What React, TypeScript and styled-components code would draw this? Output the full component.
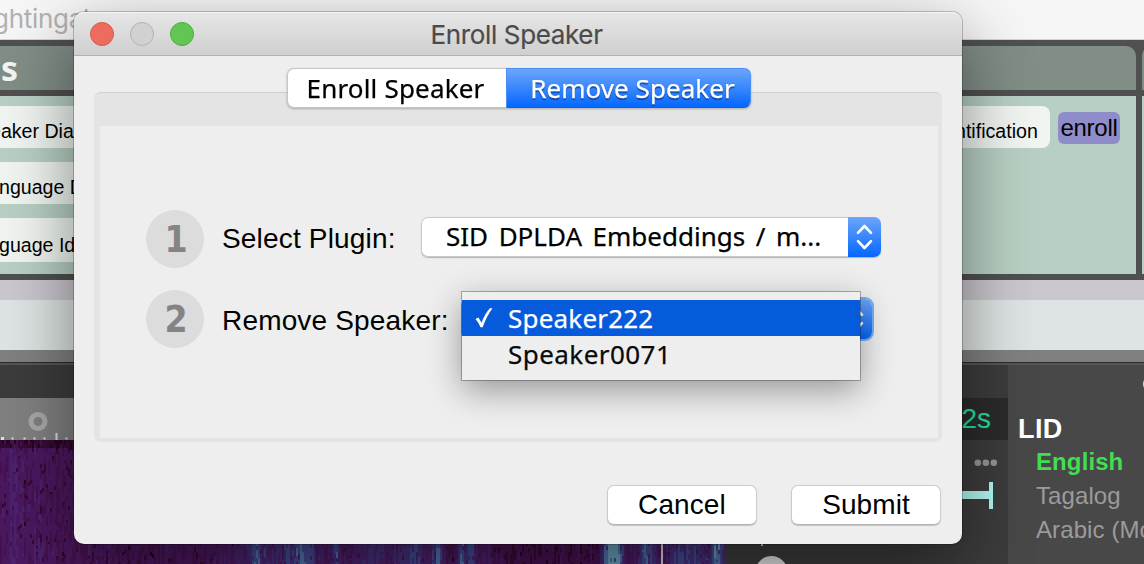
import React from "react";
import styled, { createGlobalStyle, css } from "styled-components";

const SANS = `"Liberation Sans", Arial, sans-serif`;
const HUMANIST = `"Noto Sans", "Open Sans", sans-serif`;

const GlobalStyle = createGlobalStyle`
  *, *::before, *::after { box-sizing: border-box; }
  body { margin: 0; background: #3b3b3b; overflow: hidden; }
`;

/* ---------- main window ---------- */

const Screen = styled.div`
  position: relative;
  display: flex;
  flex-direction: column;
  width: 1144px;
  height: 564px;
  overflow: hidden;
  font-family: ${SANS};
  color: #000;
`;

const AppBar = styled.header`
  height: 40px;
  flex: none;
  background: #f6f6f6;
  border-bottom: 1px solid #d2d2d2;
  font: 400 26px/38px Inter, sans-serif;
  color: #b2b2b2;
  white-space: nowrap;
`;

const AppName = styled.span`
  display: block;
  margin-left: -7px;
  letter-spacing: -0.3px;
`;

const Board = styled.section`
  display: flex;
  gap: 6px;
  height: 240px;
  flex: none;
  padding: 6px 0;
  background: #505050;
`;

const Panel = styled.div<{ $width: number }>`
  display: flex;
  flex-direction: column;
  gap: 6px;
  flex: none;
  width: ${(p) => p.$width}px;
`;

const PanelHead = styled.h2<{ $first?: boolean }>`
  margin: 0;
  height: 44px;
  padding-left: 1px;
  background: #808e86;
  border-radius: ${(p) => (p.$first ? "0 10px 0 0" : "10px 0 0 0")};
  font: 700 34px/45px ${HUMANIST};
  color: #f4f4f4;
`;

const PanelBody = styled.div`
  display: flex;
  justify-content: space-between;
  flex: 1;
  padding: 10px 16px 12px 0;
  background: #b8d0c3;
`;

const PluginColumn = styled.div`
  display: flex;
  flex-direction: column;
  gap: 14px;
`;

const Plugin = styled.div<{ $shift?: number; $tall?: boolean; $round?: boolean }>`
  width: 110px;
  height: ${(p) => (p.$tall ? 44 : 42)}px;
  padding-left: ${(p) => (p.$shift && p.$shift > 0 ? p.$shift : 0)}px;
  text-indent: ${(p) => (p.$shift && p.$shift < 0 ? p.$shift : 0)}px;
  border-radius: ${(p) => (p.$round ? "0 8px 8px 0" : "0")};
  background: #f0f5f1;
  font-size: 19.600px;
  line-height: ${(p) => (p.$tall ? 54 : 51)}px;
  white-space: nowrap;
  overflow: hidden;
`;

const PluginRow = styled.div`
  display: flex;
  gap: 8px;
`;

const Tag = styled.span`
  width: 62px;
  height: 32px;
  margin-top: 6px;
  border-radius: 6px;
  background: #8f8dc9;
  font-size: 24px;
  line-height: 32px;
  letter-spacing: -0.25px;
  text-align: center;
`;

const Band = styled.div<{ $color: string; $height: number }>`
  flex: none;
  height: ${(p) => p.$height}px;
  background: ${(p) => p.$color};
`;

const Workspace = styled.section`
  display: flex;
  flex: 1;
  min-height: 0;
`;

const Timeline = styled.div`
  display: flex;
  flex-direction: column;
  width: 1008px;
  background: #3c3c3c;
`;

const RulerRow = styled.div`
  display: flex;
  justify-content: space-between;
  height: 42px;
  margin-top: 33px;
  flex: none;
`;

const Ruler = styled.svg`
  width: 725px;
  height: 42px;
  background: #808080;
`;

const Duration = styled.div`
  width: 120px;
  padding-right: 17px;
  background: #2b2b2b;
  color: #1fe2a4;
  font-size: 28px;
  line-height: 42px;
  text-align: right;
`;

const TrackRow = styled.div`
  display: flex;
  flex: 1;
`;

const Spectrogram = styled.svg`
  width: 725px;
  height: 124px;
  background: #3d1450;
`;

const TrackControls = styled.svg`
  width: 283px;
  height: 124px;
`;

const Sidebar = styled.aside`
  flex: 1;
  overflow: hidden;
  padding-left: 10px;
  background: #484848;
  white-space: nowrap;
`;

const SidebarTop = styled.div`
  display: flex;
  justify-content: flex-end;
  height: 47px;
  padding-top: 15px;
`;

const SidebarTitle = styled.h3`
  margin: 0;
  font-size: 27px;
  line-height: 34px;
  letter-spacing: 0.4px;
  color: #fff;
`;

const Language = styled.div<{ $active?: boolean }>`
  margin-top: ${(p) => (p.$active ? -1 : 0)}px;
  padding-left: 18px;
  font-size: 24px;
  line-height: 34px;
  font-weight: ${(p) => (p.$active ? 700 : 400)};
  color: ${(p) => (p.$active ? "#40df51" : "#9b9b9b")};
  letter-spacing: 0.1px;
`;

/* ---------- dialog ---------- */

const Dialog = styled.div`
  position: absolute;
  left: 74px;
  top: 12px;
  display: flex;
  flex-direction: column;
  width: 888px;
  height: 532px;
  border-radius: 10px;
  background: #eeeeee;
  box-shadow: 0 0 0 1px rgba(0, 0, 0, 0.22), 0 24px 70px rgba(0, 0, 0, 0.46);
`;

const TitleBar = styled.div`
  display: flex;
  align-items: center;
  height: 44px;
  flex: none;
  padding: 0 16px;
  border-radius: 10px 10px 0 0;
  border-top: 1px solid #f5f5f5;
  border-bottom: 1px solid #b1b1b1;
  background: linear-gradient(#e6e6e6, #cfcfcf);
`;

const Lights = styled.div`
  display: flex;
  gap: 16px;
  width: 104px;
`;

const Light = styled.span<{ $fill: string; $edge: string }>`
  width: 24px;
  height: 24px;
  border-radius: 50%;
  border: 1px solid ${(p) => p.$edge};
  background: ${(p) => p.$fill};
`;

const Title = styled.h1`
  flex: 1;
  margin: 0 107px 0 0;
  padding-top: 1px;
  font: 400 26px/39px Inter, sans-serif;
  letter-spacing: -0.35px;
  -webkit-text-stroke: 0.2px;
  text-align: center;
  color: #4b4b4b;
`;

const Tabs = styled.div`
  display: flex;
  z-index: 1;
  align-self: flex-start;
  margin: 12px 0 -16px 213px;
  filter: drop-shadow(0 1px 1px rgba(0, 0, 0, 0.25));
`;

const Tab = styled.button<{ $active?: boolean }>`
  height: 40px;
  padding: 0 3px 0 0;
  width: ${(p) => (p.$active ? 245 : 219)}px;
  border: 1px solid #c6c6c6;
  border-right: 0;
  border-radius: 7px 0 0 7px;
  background: #fff;
  font: 400 26px/38px ${HUMANIST};
  letter-spacing: 0.18px;
  -webkit-text-stroke: 0.25px;
  ${(p) =>
    p.$active &&
    css`
      border: 1px solid #4a8ff8;
      border-bottom-color: #0a62f0;
      border-radius: 0 7px 7px 0;
      padding: 0 0 0 8px;
      background: linear-gradient(#6ca6fb, #0567ff);
      color: #fff;
      letter-spacing: 0.04px;
      text-shadow: 0 2px 1px rgba(0, 30, 90, 0.55);
    `}
`;

const Group = styled.div`
  display: flex;
  flex-direction: column;
  margin: 0 20px;
  height: 350px;
  padding: 33px 4px 4px 6px;
  border-top: 1px solid #d0d0d0;
  border-radius: 7px;
  background: #e4e4e4;
`;

const Steps = styled.div`
  display: flex;
  flex-direction: column;
  gap: 22px;
  flex: 1;
  padding: 84px 0 0 46px;
  background: #eeeeee;
`;

const Step = styled.div`
  position: relative;
  display: flex;
  align-items: center;
  height: 58px;
`;

const StepNumber = styled.span`
  width: 58px;
  height: 58px;
  margin-right: 18px;
  padding-left: 2px;
  border-radius: 50%;
  background: #dcdcdc;
  color: #848484;
  font: 700 37px/59px "DejaVu Sans Condensed", "DejaVu Sans", sans-serif;
  text-align: center;
`;

const StepLabel = styled.label<{ $width: number; $drop: number }>`
  width: ${(p) => p.$width}px;
  padding-top: ${(p) => p.$drop}px;
  font-size: 28px;
  line-height: 32px;
  letter-spacing: 0.17px;
  white-space: nowrap;
`;

const SelectBox = styled.div<{ $width: number; $focus?: boolean }>`
  display: flex;
  width: ${(p) => p.$width}px;
  height: 40px;
  margin-top: -4px;
  border-radius: 7px;
  background: #fff;
  box-shadow: inset 0 0 0 1px #c8c8c8, 0 1px 1px rgba(0, 0, 0, 0.25);
  ${(p) =>
    p.$focus &&
    css`
      margin-top: 0;
      box-shadow: 0 0 0 2px #77b0ef;
    `}
`;

const SelectValue = styled.span`
  flex: 1;
  padding-left: 25px;
  font: 400 26px/38px ${HUMANIST};
  letter-spacing: 0;
  word-spacing: 3.800px;
  -webkit-text-stroke: 0.25px;
  white-space: nowrap;
`;

const SelectArrow = styled.svg`
  width: 33px;
  height: 40px;
  border-radius: 0 7px 7px 0;
  background: linear-gradient(#6ca6fb, #0567ff);
`;

const Menu = styled.ul`
  position: absolute;
  left: 316px;
  top: 2px;
  width: 398px;
  height: 88px;
  margin: 0;
  padding: 8px 0;
  list-style: none;
  background: #eeeeee;
  box-shadow: 0 0 0 1px rgba(0, 0, 0, 0.28), 0 10px 34px rgba(0, 0, 0, 0.38);
`;

const MenuItem = styled.li<{ $selected?: boolean }>`
  display: flex;
  align-items: center;
  height: 36px;
  padding-left: 12px;
  background: ${(p) => (p.$selected ? "#065bdc" : "transparent")};
  color: ${(p) => (p.$selected ? "#fff" : "#0a0a0a")};
  font: 400 26px/36px ${HUMANIST};
  letter-spacing: ${(p) => (p.$selected ? 0.2 : 0.45)}px;
  -webkit-text-stroke: 0.25px;
`;

const CheckSlot = styled.svg`
  width: 22px;
  height: 24px;
  margin-right: 12px;
`;

const Actions = styled.div`
  display: flex;
  justify-content: flex-end;
  gap: 34px;
  padding: 43px 21px 0 0;
`;

const ActionButton = styled.button`
  width: 150px;
  height: 40px;
  padding: 0;
  border: 1px solid #cbcbcb;
  border-bottom-color: #b4b4b4;
  border-radius: 7px;
  background: #fff;
  box-shadow: 0 1px 1px rgba(0, 0, 0, 0.18);
  font: 400 28px/36px ${SANS};
  letter-spacing: 0.1px;
`;

/* ---------- drawings ---------- */

const SHADES = ["#26051f", "#360a36", "#45124f", "#4a185f", "#4a226d", "#44307a", "#424a90", "#5072a6", "#6a9cb8"];

const BURSTS: [number, number, number][] = [
  [12, 8, 0.8], [36, 8, 0.4], [256, 4, 2.2], [262, 34, 1.8], [302, 20, 3], [336, 5, 2.8], [370, 18, 2.2],
  [412, 18, 2.6], [437, 5, 3.8], [461, 4, 3.6], [470, 4, 3.4], [485, 12, 1], [608, 7, 4.6], [616, 7, 4.6],
  [645, 10, 3.6], [678, 14, 2.8], [700, 12, 2.4], [717, 7, 4],
];

function buildSpectrogram() {
  let seed = 77;
  const rnd = () => {
    seed = (seed * 1664525 + 1013904223) >>> 0;
    return seed / 4294967296;
  };
  const paths = SHADES.map(() => "");
  for (let x = 0; x < 725; x += 2) {
    let level = 2.1 + rnd() * 1.1;
    if (x > 490 && x < 600) level -= 0.8;
    for (const [at, width, gain] of BURSTS) level += gain * Math.exp(-(((x - at) / width) ** 2));
    let y = x < 74 ? 0 : 98;
    while (y < 124) {
      const h = 2 + 2 * Math.floor(rnd() * 6);
      const dip = rnd() < 0.13 ? 1.6 : 0;
      const top = y < 7 ? 1.8 : 0;
      const v = Math.round(level - dip - top + (rnd() - 0.5) * 1.3);
      const shade = Math.max(0, Math.min(SHADES.length - 1, v));
      const run = dip || top ? Math.min(h, 4) : h;
      paths[shade] += `M${x} ${y}h2v${run}h-2z`;
      y += run;
    }
  }
  return paths;
}

const SPECTRUM = buildSpectrogram();

const Arrows = () => (
  <SelectArrow viewBox="0 0 33 40" fill="none" stroke="#fff" strokeWidth="2.600" strokeLinecap="round" strokeLinejoin="round">
    <path d="M10 15.800l6.500-6.800 6.500 6.800M10 24.200l6.500 6.800 6.500-6.800" />
  </SelectArrow>
);

export default function App() {
  return (
    <>
      <GlobalStyle />
      <Screen>
        <AppBar>
          <AppName>ghtingal</AppName>
        </AppBar>

        <Board>
          <Panel $width={1136}>
            <PanelHead $first>s</PanelHead>
            <PanelBody>
              <PluginColumn>
                <Plugin $shift={-10}>eaker Dia</Plugin>
                <Plugin $shift={-1}>nguage D</Plugin>
                <Plugin $shift={-1} $tall>guage Id</Plugin>
              </PluginColumn>
              <PluginRow>
                <Plugin $shift={15} $round>ntification</Plugin>
                <Tag>enroll</Tag>
              </PluginRow>
            </PanelBody>
          </Panel>
          <Panel $width={40}>
            <PanelHead />
            <PanelBody />
          </Panel>
        </Board>

        <Band $color="#cac7ce" $height={20} />
        <Band $color="#dee4e3" $height={50} />
        <Band $color="#808080" $height={12} />
        <Band $color="#2a2a2a" $height={1} />
        <Band $color="#565656" $height={2} />

        <Workspace>
          <Timeline>
            <RulerRow>
              <Ruler viewBox="0 0 725 42">
                <circle cx="38" cy="23.500" r="7" fill="none" stroke="#a8a8a8" strokeWidth="5" />
                <path
                  d="M1 39h3v3h-3zM11.500 39.500h2v2h-2zM23.500 39.500h2v2h-2zM33.500 39.500h2v2h-2zM43.500 39.500h2v2h-2zM55.500 35h2v7h-2zM65.500 39.500h2v2h-2z"
                  fill="#dedede"
                />
              </Ruler>
              <Duration>2s</Duration>
            </RulerRow>
            <TrackRow>
              <Spectrogram viewBox="0 0 725 124" shapeRendering="crispEdges">
                {SPECTRUM.map((d, i) => (
                  <path key={i} d={d} fill={SHADES[i]} />
                ))}
                <rect x="661" y="0" width="2" height="124" fill="#d8d0d4" />
              </Spectrogram>
              <TrackControls viewBox="0 0 283 124">
                <g fill="#969696">
                  <circle cx="252.800" cy="22.700" r="3.300" />
                  <circle cx="260.800" cy="22.700" r="3.300" />
                  <circle cx="268.800" cy="22.700" r="3.300" />
                </g>
                <path d="M225 51h39v-9h4v27h-4v-10h-39z" fill="#b2fbf2" />
                <rect x="36" y="103" width="2" height="3" fill="#d8d8d8" />
                <circle cx="46.500" cy="132" r="16" fill="#e0e0e0" />
              </TrackControls>
            </TrackRow>
          </Timeline>
          <Sidebar>
            <SidebarTop>
              <svg width="2" height="8" viewBox="0 0 2 8">
                <path d="M2 0Q-0.500 4 2 8z" fill="#c4c4c4" />
              </svg>
            </SidebarTop>
            <SidebarTitle>LID</SidebarTitle>
            <Language $active>English</Language>
            <Language>Tagalog</Language>
            <Language>Arabic (Mo</Language>
          </Sidebar>
        </Workspace>

        <Dialog role="dialog">
          <TitleBar>
            <Lights>
              <Light $fill="#ee6b60" $edge="#d9584c" />
              <Light $fill="#d1d1d1" $edge="#b2b2b2" />
              <Light $fill="#62c655" $edge="#4aac3d" />
            </Lights>
            <Title>Enroll Speaker</Title>
          </TitleBar>
          <Tabs>
            <Tab>Enroll Speaker</Tab>
            <Tab $active>Remove Speaker</Tab>
          </Tabs>
          <Group>
            <Steps>
              <Step>
                <StepNumber>1</StepNumber>
                <StepLabel $width={199} $drop={0}>Select Plugin:</StepLabel>
                <SelectBox $width={460}>
                  <SelectValue>SID DPLDA Embeddings / m...</SelectValue>
                  <Arrows />
                </SelectBox>
              </Step>
              <Step>
                <StepNumber>2</StepNumber>
                <StepLabel $width={241} $drop={3}>Remove Speaker:</StepLabel>
                <SelectBox $width={409} $focus>
                  <SelectValue />
                  <Arrows />
                </SelectBox>
                <Menu>
                  <MenuItem $selected>
                    <CheckSlot viewBox="0 0 22 24">
                      <path d="M1.500 13l3-1.500 3 5.300q3.500-9.500 8.500-14.500h2.500q-6 8-9.800 19h-2.200q-2-5-5-8.300z" fill="#fff" />
                    </CheckSlot>
                    Speaker222
                  </MenuItem>
                  <MenuItem>
                    <CheckSlot />
                    Speaker0071
                  </MenuItem>
                </Menu>
              </Step>
            </Steps>
          </Group>
          <Actions>
            <ActionButton>Cancel</ActionButton>
            <ActionButton>Submit</ActionButton>
          </Actions>
        </Dialog>
      </Screen>
    </>
  );
}
